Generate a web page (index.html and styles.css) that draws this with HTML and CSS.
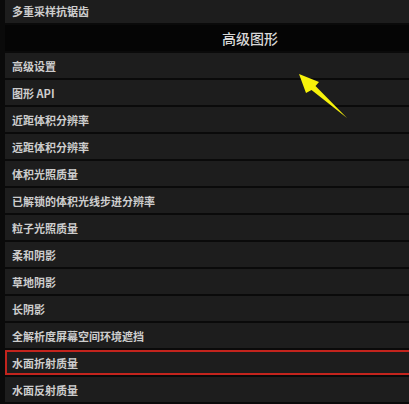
FILE: index.html
```html
<!DOCTYPE html>
<html lang="zh">
  <head>
    <meta charset="UTF-8" />
    <meta name="viewport" content="width=device-width, initial-scale=1.0" />
    <title>高级图形</title>
    <link rel="stylesheet" href="styles.css">
  </head>
  <body>
    <div class="menu">
      <div class="row">多重采样抗锯齿</div>
      <div class="section">高级图形</div>
      <div class="row">高级设置</div>
      <div class="row">图形 API</div>
      <div class="row">近距体积分辨率</div>
      <div class="row">远距体积分辨率</div>
      <div class="row">体积光照质量</div>
      <div class="row">已解锁的体积光线步进分辨率</div>
      <div class="row">粒子光照质量</div>
      <div class="row">柔和阴影</div>
      <div class="row">草地阴影</div>
      <div class="row">长阴影</div>
      <div class="row">全解析度屏幕空间环境遮挡</div>
      <div class="row marked">水面折射质量</div>
      <div class="row">水面反射质量</div>
    </div>

    <svg class="arrow" width="409" height="404" viewBox="0 0 409 404">
      <polygon points="299,74 319,82 315.5,86 347,118 311.5,90 306,93" fill="#f7f20a" />
    </svg>
  </body>
</html>
```

FILE: styles.css
```css
body {
  margin: 0;
  background-color: #0a0a0a;
  font-family: "Noto Sans CJK SC", "Liberation Serif", serif;
  overflow: hidden;
  height: 404px;
  position: relative;
}
.menu {
  display: flex;
  flex-direction: column;
  gap: 2px;
  margin-top: -2px;
  padding-left: 5px;
}
.row {
  height: 25px;
  display: flex;
  align-items: center;
  padding-left: 7px;
  background-color: #1d1d1d;
  color: #cdcdcd;
  font-size: 11px;
  font-weight: 700;
}
.section {
  height: 26px;
  display: flex;
  align-items: center;
  padding-left: 217px;
  background-color: #050505;
  color: #d8d8d8;
  font-size: 14px;
  font-weight: 500;
}
.marked {
  box-shadow: inset 2px 2px 0 #c3241d, inset 0 -2px 0 #c3241d;
}
.arrow {
  position: absolute;
  left: 0;
  top: 0;
}
```
